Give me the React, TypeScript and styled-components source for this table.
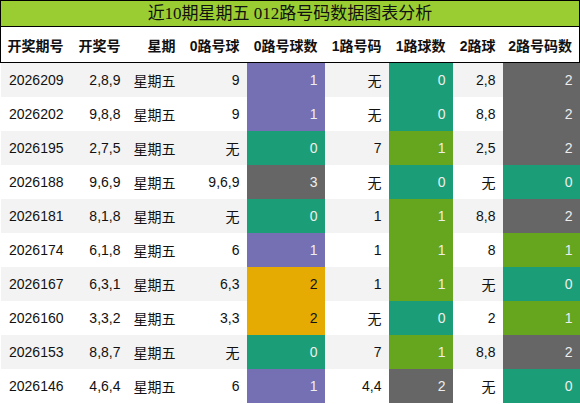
import React from 'react';
import styled, { createGlobalStyle } from 'styled-components';

const GlobalStyle = createGlobalStyle`
    body {
        margin: 0;
        background: #ffffff;
        font-family: "Liberation Sans", "Noto Sans CJK SC", sans-serif;
    }
`;

const TEAL = '#1b9e77';
const PURPLE = '#7570b3';
const GOLD = '#e6ab02';
const GREY = '#666666';
const GREEN = '#66a61e';

// 0路号球数 uses a different palette than the 1路/2路 columns
const zeroPalette: Record<number, string> = { 0: TEAL, 1: PURPLE, 2: GOLD, 3: GREY };
const otherPalette: Record<number, string> = { 0: TEAL, 1: GREEN, 2: GREY };

type Row = {
    issue: string;
    nums: string;
    day: string;
    zero: string;
    zeroCount: number;
    one: string;
    oneCount: number;
    two: string;
    twoCount: number;
};

const rows: Row[] = [
    { issue: '2026209', nums: '2,8,9', day: '星期五', zero: '9', zeroCount: 1, one: '无', oneCount: 0, two: '2,8', twoCount: 2 },
    { issue: '2026202', nums: '9,8,8', day: '星期五', zero: '9', zeroCount: 1, one: '无', oneCount: 0, two: '8,8', twoCount: 2 },
    { issue: '2026195', nums: '2,7,5', day: '星期五', zero: '无', zeroCount: 0, one: '7', oneCount: 1, two: '2,5', twoCount: 2 },
    { issue: '2026188', nums: '9,6,9', day: '星期五', zero: '9,6,9', zeroCount: 3, one: '无', oneCount: 0, two: '无', twoCount: 0 },
    { issue: '2026181', nums: '8,1,8', day: '星期五', zero: '无', zeroCount: 0, one: '1', oneCount: 1, two: '8,8', twoCount: 2 },
    { issue: '2026174', nums: '6,1,8', day: '星期五', zero: '6', zeroCount: 1, one: '1', oneCount: 1, two: '8', twoCount: 1 },
    { issue: '2026167', nums: '6,3,1', day: '星期五', zero: '6,3', zeroCount: 2, one: '1', oneCount: 1, two: '无', twoCount: 0 },
    { issue: '2026160', nums: '3,3,2', day: '星期五', zero: '3,3', zeroCount: 2, one: '无', oneCount: 0, two: '2', twoCount: 1 },
    { issue: '2026153', nums: '8,8,7', day: '星期五', zero: '无', zeroCount: 0, one: '7', oneCount: 1, two: '8,8', twoCount: 2 },
    { issue: '2026146', nums: '4,6,4', day: '星期五', zero: '6', zeroCount: 1, one: '4,4', oneCount: 2, two: '无', twoCount: 0 },
];

const headers = ['开奖期号', '开奖号', '星期', '0路号球', '0路号球数', '1路号码', '1路球数', '2路球', '2路号码数'];
const widths = [70, 57, 55, 64, 78, 64, 64, 50, 77];

function App() {
    return (
        <Page>
            <GlobalStyle />
            <Title>近10期星期五 012路号码数据图表分析</Title>
            <Table>
                <colgroup>
                    {widths.map((w, i) => <col key={i} style={{ width: w }} />)}
                </colgroup>
                <thead>
                    <tr>
                        {headers.map((h) => <HeadCell key={h}>{h}</HeadCell>)}
                    </tr>
                </thead>
                <tbody>
                    {rows.map((r, i) => (
                        <BodyRow key={r.issue} $striped={i % 2 === 0}>
                            <Cell>{r.issue}</Cell>
                            <Cell>{r.nums}</Cell>
                            <Cell>{r.day}</Cell>
                            <Cell>{r.zero}</Cell>
                            <CountCell $bg={zeroPalette[r.zeroCount]}>{r.zeroCount}</CountCell>
                            <Cell>{r.one}</Cell>
                            <CountCell $bg={otherPalette[r.oneCount]}>{r.oneCount}</CountCell>
                            <Cell>{r.two}</Cell>
                            <CountCell $bg={otherPalette[r.twoCount]}>{r.twoCount}</CountCell>
                        </BodyRow>
                    ))}
                </tbody>
            </Table>
        </Page>
    );
}

const Page = styled.div`
    width: 580px;
`;

const Title = styled.div`
    box-sizing: border-box;
    width: 580px;
    height: 27px;
    border: 1px solid #000000;
    background-color: #9acd32;
    color: #111111;
    font-family: "Liberation Serif", "Noto Sans CJK SC", serif;
    font-size: 17px;
    line-height: 25px;
    text-align: center;
`;

const Table = styled.table`
    width: 579px;
    border-collapse: collapse;
    table-layout: fixed;
    font-size: 14px;
`;

const HeadCell = styled.th`
    height: 35px;
    padding: 0 7px 0 0;
    text-align: right;
    font-weight: bold;
    font-size: 14px;
    color: #111111;
    background: #ffffff;
    border-bottom: 1px solid #000000;
    white-space: nowrap;

    &:first-child {
        border-left: 1px solid #000000;
    }
    &:last-child {
        border-right: 1px solid #000000;
    }
`;

const BodyRow = styled.tr<{ $striped: boolean }>`
    height: 34px;
    background-color: ${(p) => (p.$striped ? '#f3f3f3' : '#ffffff')};
`;

const Cell = styled.td`
    padding: 0 7px 0 0;
    text-align: right;
    color: #111111;
    white-space: nowrap;
`;

const CountCell = styled(Cell)<{ $bg: string }>`
    background-color: ${(p) => p.$bg};
    color: ${(p) => (p.$bg === GOLD ? '#111111' : '#eeeeee')};
`;

export default App;
